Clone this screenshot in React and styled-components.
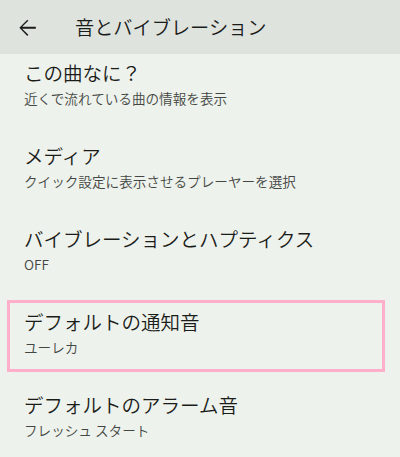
import React from "react";
import styled, { createGlobalStyle } from "styled-components";

const Global = createGlobalStyle`
  html, body { margin: 0; padding: 0; background: #eef2ec; }
  body { font-family: "Noto Sans CJK JP", "Noto Sans", Roboto, sans-serif; -webkit-font-smoothing: antialiased; }
`;

const Screen = styled.div`
  width: 400px;
  height: 457px;
  overflow: hidden;
  background: #eef2ec;
  display: flex;
  flex-direction: column;
`;

const TopBar = styled.header`
  position: relative;
  z-index: 1;
  height: 54px;
  flex-shrink: 0;
  background: #dfe3de;
  display: flex;
  align-items: center;
  padding-left: 15px;
  gap: 35px;
`;

const BackButton = styled.button`
  width: 25px;
  height: 25px;
  padding: 0;
  border: 0;
  background: none;
  display: flex;
  align-items: center;
  justify-content: center;
  color: #1c1d1b;
  margin-top: 2px;
`;

const Title = styled.h1`
  margin: 0;
  font-size: 19.2px;
  font-weight: 350;
  color: #1a1c19;
  line-height: 26px;
  letter-spacing: 0;
`;

const List = styled.ul`
  list-style: none;
  margin: -12.5px 0 0;
  padding: 0;
`;

const Item = styled.li`
  position: relative;
  padding: 18px 24px 17px;
  height: 83px;
  box-sizing: border-box;
  display: flex;
  flex-direction: column;
`;

const ItemTitle = styled.div`
  font-size: 19.5px;
  font-weight: 350;
  line-height: 26px;
  color: #1a1c19;
  white-space: nowrap;
`;

const ItemSub = styled.div`
  margin-top: 2px;
  font-size: 13.6px;
  font-weight: 350;
  line-height: 20px;
  color: #434743;
  white-space: nowrap;
`;

const Highlight = styled.div`
  position: absolute;
  left: 7px;
  top: 9.5px;
  width: 378px;
  height: 72px;
  box-sizing: border-box;
  border: 3px solid #ffaecb;
  pointer-events: none;
`;

const items = [
  { title: "この曲なに？", sub: "近くで流れている曲の情報を表示" },
  { title: "メディア", sub: "クイック設定に表示させるプレーヤーを選択" },
  { title: "バイブレーションとハプティクス", sub: "OFF" },
  { title: "デフォルトの通知音", sub: "ユーレカ", highlighted: true },
  { title: "デフォルトのアラーム音", sub: "フレッシュ スタート" },
];

export default function App() {
  return (
    <Screen>
      <Global />
      <TopBar>
        <BackButton aria-label="戻る">
          <svg width="25.5" height="25.5" viewBox="0 0 24 24" fill="currentColor">
            <path d="M20 11.1H6.9l5.9-5.9-1-1L4.2 12l7.6 7.8 1-1-5.9-5.9H20z" />
          </svg>
        </BackButton>
        <Title>音とバイブレーション</Title>
      </TopBar>
      <List>
        {items.map((it) => (
          <Item key={it.title}>
            <ItemTitle>{it.title}</ItemTitle>
            <ItemSub>{it.sub}</ItemSub>
            {it.highlighted && <Highlight />}
          </Item>
        ))}
      </List>
    </Screen>
  );
}
